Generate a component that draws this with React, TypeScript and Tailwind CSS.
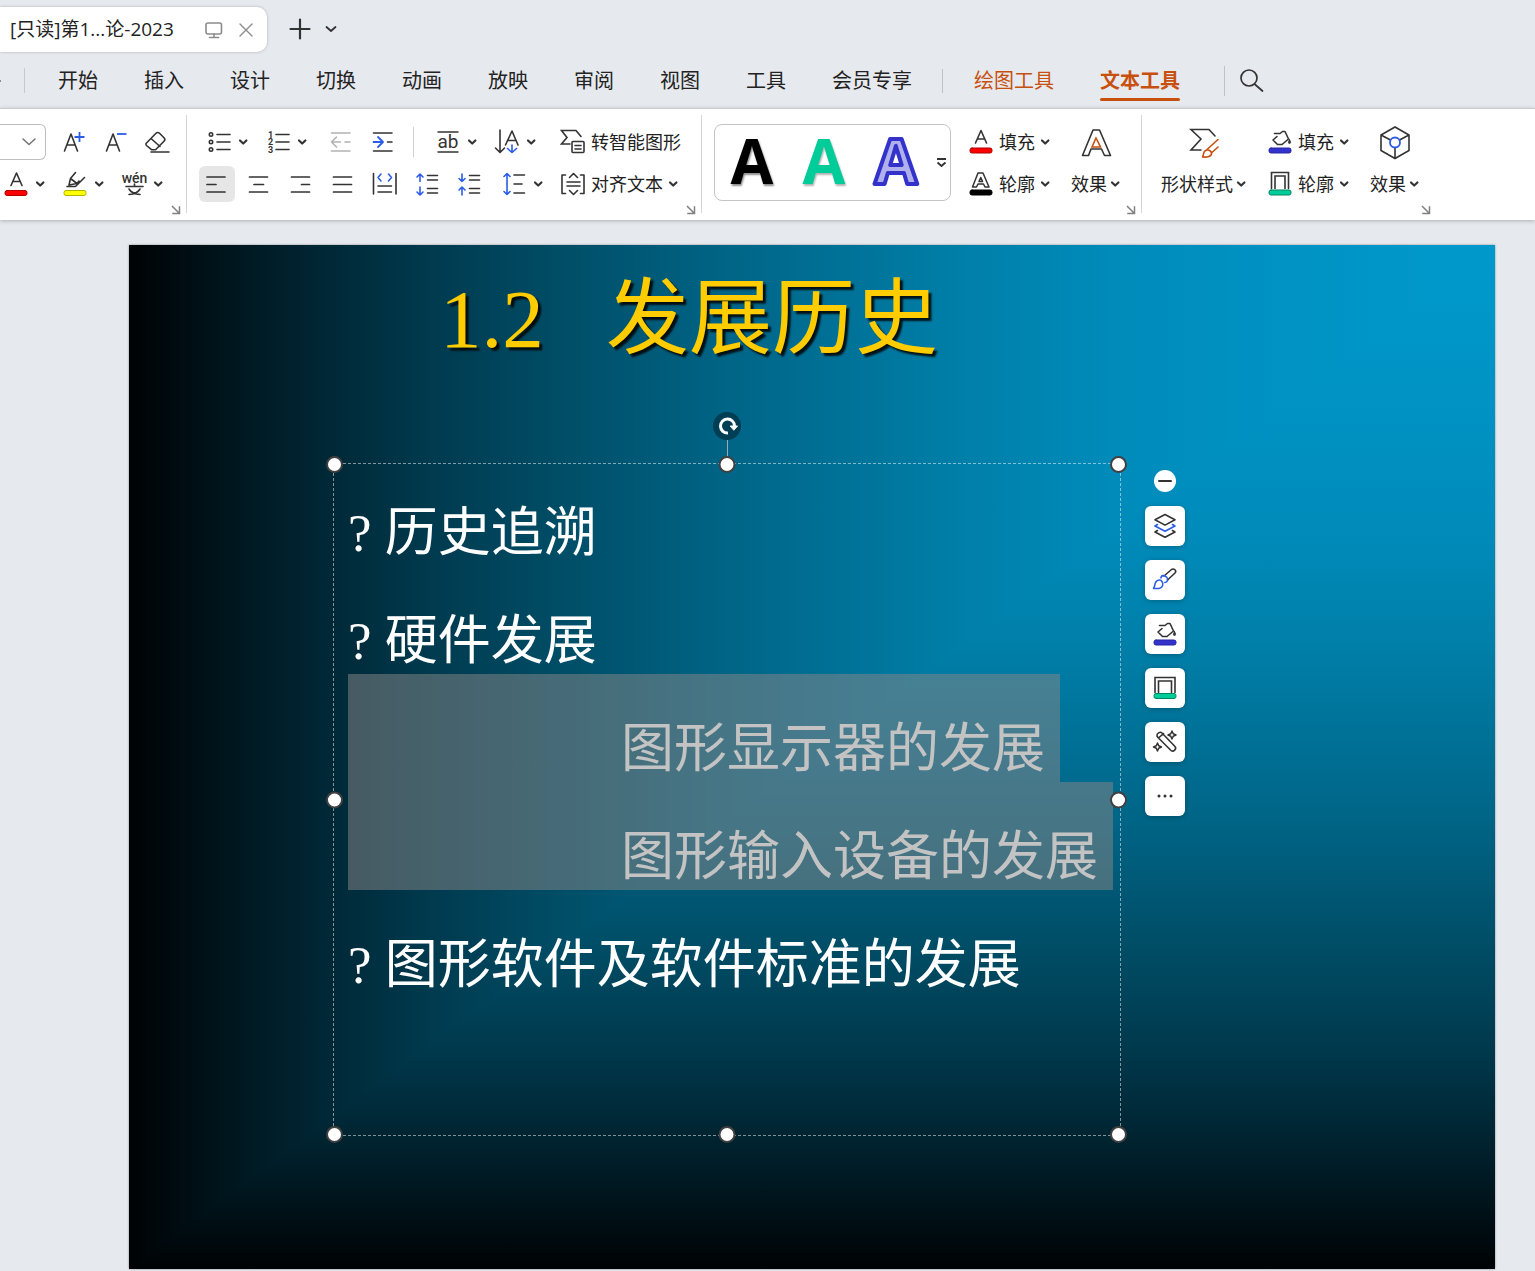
import React from "react";

const INK = "#333333";
const BLUE = "#2b5ce6";
const ORANGE = "#c8500f";

type IconProps = { w?: number; h?: number; children: React.ReactNode; color?: string };

function Icon({ w = 28, h = 28, children, color = INK }: IconProps) {
  return (
    <svg
      width={w}
      height={h}
      viewBox={`0 0 ${w} ${h}`}
      fill="none"
      stroke={color}
      strokeWidth={1.6}
      strokeLinecap="round"
      strokeLinejoin="round"
      className="shrink-0 overflow-visible"
      aria-hidden="true"
    >
      {children}
    </svg>
  );
}

const Chevron = () => (
  <Icon w={12} h={12}>
    <path d="M3 4.500l3.200 3 3.200-3" strokeWidth={2.2} />
  </Icon>
);

function Glyph({ x, y, size, weight = 700, children }: { x: number; y: number; size: number; weight?: number; children: string }) {
  return (
    <text x={x} y={y} fontSize={size} fontFamily="Roboto, sans-serif" fontWeight={weight} fill={INK} stroke="none" textAnchor="middle">
      {children}
    </text>
  );
}

function ColorBar({ fill, edge, y = 20 }: { fill: string; edge: string; y?: number }) {
  return <rect x={3} y={y} width={22} height={5} rx={2} fill={fill} stroke={edge} strokeWidth={1} />;
}

function Split({ label, children }: { label: string; children: React.ReactNode }) {
  return (
    <button aria-label={label} className="flex h-9 w-[59px] shrink-0 items-center gap-1">
      {children}
      <Chevron />
    </button>
  );
}

function Tool({ label, active, children }: { label: string; active?: boolean; children: React.ReactNode }) {
  return (
    <button aria-label={label} className={`flex size-9 shrink-0 items-center justify-center rounded-md ${active ? "bg-[#e6e6e6]" : ""}`}>
      {children}
    </button>
  );
}

function Labeled({ icon, text, arrow }: { icon: React.ReactNode; text: string; arrow?: boolean }) {
  return (
    <button className="flex h-9 shrink-0 items-center gap-1 whitespace-nowrap">
      {icon}
      <span>{text}</span>
      {arrow && <Chevron />}
    </button>
  );
}

function Stacked({ icon, text }: { icon: React.ReactNode; text: string }) {
  return (
    <button className="flex shrink-0 flex-col items-center gap-1.5">
      <span className="flex h-9 items-center">{icon}</span>
      <span className="flex h-9 items-center whitespace-nowrap">
        {text}
        <span className="ml-0.5"><Chevron /></span>
      </span>
    </button>
  );
}

function Launcher({ label }: { label: string }) {
  return (
    <button aria-label={label} className="absolute right-1 -bottom-[3px]">
      <Icon w={12} h={12} color="#808080">
        <path d="M2.500 2.500l7 7M9.500 3v6.500H3" strokeWidth={1.5} strokeLinecap="square" />
      </Icon>
    </button>
  );
}

const FillIcon = () => (
  <Icon>
    <path d="M8.500 5.500h5.500l2.500-2h2.500l3.500 7.500-6.500 5.500h-4.500l-4.500-4.500 4-3.500" />
    <path d="M23.500 11.500c1.600 2.400 1.400 4 0 4s-1.600-1.600 0-4z" fill={INK} strokeWidth={0.8} />
    <ColorBar fill="#3333cc" edge="#2424a8" />
  </Icon>
);

const OutlineIcon = () => (
  <Icon>
    <path d="M5.500 18.500V2.500h17v16M9 18.500V6h10v12.500" strokeLinejoin="miter" />
    <ColorBar fill="#00cc99" edge="#00875f" />
  </Icon>
);

const rows = (d: string, color = INK) => (
  <Icon color={color}><path d={d} strokeWidth={1.7} /></Icon>
);

const menus = ["开始", "插入", "设计", "切换", "动画", "放映", "审阅", "视图", "工具", "会员专享"];

function TitleBar() {
  return (
    <header className="flex h-[53px] items-start pt-[7px]">
      <div className="flex h-[45px] w-[267px] shrink-0 items-center rounded-r-[10px] bg-white pl-[10px] shadow-[0_0_3px_rgba(0,0,0,0.25)]">
        <span className="flex-1 whitespace-nowrap text-[19px]">[只读]第1...论-2023</span>
        <Icon w={20} h={20} color="#8c8c8c">
          <rect x={2} y={3} width={15.500} height={11} rx={2} />
          <path d="M10 14v3M5.500 17.500h9" />
        </Icon>
        <button aria-label="关闭" className="mr-[11px] ml-3">
          <Icon w={20} h={20} color="#8c8c8c"><path d="M4 4l12 12M16 4L4 16" strokeWidth={1.4} /></Icon>
        </button>
      </div>
      <button aria-label="新建" className="ml-5 flex h-11 items-center">
        <Icon w={26} h={26}><path d="M13 3.500v19M3.500 13h19" strokeWidth={2.2} /></Icon>
      </button>
      <button aria-label="标签列表" className="ml-2.5 flex h-11 items-center">
        <Icon w={16} h={16}><path d="M3.500 6l4.500 4 4.500-4" strokeWidth={1.8} /></Icon>
      </button>
    </header>
  );
}

function MenuBar() {
  return (
    <nav className="flex h-[55px] items-center text-xl whitespace-nowrap">
      <span className="h-0.5 w-px bg-[#8a8d92]" />
      <span className="mr-[33px] ml-[23px] h-[25px] w-px bg-[#c6c9cd]" />
      <div className="flex gap-[46px]">
        {menus.map((m) => (
          <button key={m}>{m}</button>
        ))}
      </div>
      <span className="mr-[31px] ml-[30px] h-6 w-px bg-[#bfc2c6]" />
      <button className="text-[#c8500f]">绘图工具</button>
      <button className="relative ml-[46px] font-bold text-[#c8500f]">
        文本工具
        <span className="absolute -bottom-1.5 left-0 h-[3px] w-full rounded-full bg-[#c8500f]" />
      </button>
      <span className="mr-3.5 ml-11 h-[30px] w-px bg-[#bfc2c6]" />
      <button aria-label="搜索">
        <Icon w={26} h={26}><path d="M15.500 16l8 7M2 10a8 8 0 1016 0 8 8 0 10-16 0" strokeWidth={1.7} /></Icon>
      </button>
    </nav>
  );
}

function FontGroup() {
  return (
    <section className="relative flex w-[187px] shrink-0 flex-col gap-1.5 border-r border-[#d4d4d4] pt-[9px]">
      <div className="flex">
        <button aria-label="字号" className="mr-[9px] flex h-9 w-[46px] items-center rounded-r-md border border-l-0 border-[#bdbdbd] pl-5">
          <Icon w={18} h={18} color="#737373"><path d="M3 6l6 5.500L15 6" strokeWidth={1.500} /></Icon>
        </button>
        <div className="flex gap-1.5">
          <Tool label="增大字号">
            <Icon>
              <path d="M5.500 23L12 6l6.500 17M8 17h8" />
              <path d="M20.500 4v10M15.500 9h10" stroke={BLUE} strokeWidth={1.8} strokeLinecap="butt" />
            </Icon>
          </Tool>
          <Tool label="减小字号">
            <Icon>
              <path d="M5.500 23L12 6l6.500 17M8 17h8" />
              <path d="M16 6h9.500" stroke={BLUE} strokeWidth={1.8} strokeLinecap="butt" />
            </Icon>
          </Tool>
          <Tool label="清除格式">
            <Icon>
              <path d="M3 15.500L13 5.200c1-1 2.500-1 3.500 0l4.500 4.500c1 1 1 2.500 0 3.500l-8.500 8.500H8.500L3.500 17.500c-.700-.700-.700-1.300-.500-2zM8 10.500l9 8M8 24h18" />
            </Icon>
          </Tool>
        </div>
      </div>
      <div className="flex pl-0.5">
        <Split label="字体颜色">
          <Icon><path d="M9 15.500L14.500 3 20 15.500M11 11.500h7" /><ColorBar fill="#ff0000" edge="#b00000" y={20.500} /></Icon>
        </Split>
        <Split label="突出显示">
          <Icon><path d="M6 16.500h8.500l9-9M14.500 2.500L9.500 8.500 8 15l8-1.500M9.500 8.500l6.500 5 2-2.500" /><ColorBar fill="#ffff00" edge="#b3b300" y={20.500} /></Icon>
        </Split>
        <Split label="拼音指南">
          <Icon>
            <Glyph x={14.500} y={13} size={14} weight={500}>wén</Glyph>
            <path d="M6 16.500h17M14.500 14v2.500M9 19c2 3.500 6 5 11 5.500M20 19c-2 3.500-6 5-11 5.500" />
          </Icon>
        </Split>
      </div>
      <Launcher label="字体设置" />
    </section>
  );
}

function ParagraphGroup() {
  return (
    <section className="relative flex w-[515px] shrink-0 flex-col gap-1.5 border-r border-[#d4d4d4] pt-[9px] pl-3">
      <div className="flex items-center pl-1.5">
        <Split label="项目符号">
          <Icon>
            <path d="M12 6.500h13M12 14h13M12 21.500h13" />
            <circle cx={6} cy={6.500} r={1.700} /><circle cx={6} cy={14} r={1.700} /><circle cx={6} cy={21.500} r={1.700} />
          </Icon>
        </Split>
        <Split label="编号">
          <Icon>
            <path d="M12 6.500h13M12 14h13M12 21.500h13" />
            <Glyph x={6.500} y={9.500} size={9}>1</Glyph>
            <Glyph x={6.500} y={17} size={9}>2</Glyph>
            <Glyph x={6.500} y={24.500} size={9}>3</Glyph>
          </Icon>
        </Split>
        <div className="flex gap-1.5">
          <Tool label="减少缩进">
            <Icon color="#b3b3b3"><path d="M4.500 5h18.500M4.500 23h18.500M4.500 14h9M18 14h5M9.500 9l-5 5 5 5" /></Icon>
          </Tool>
          <Tool label="增加缩进">
            <Icon>
              <path d="M4.500 5h18.500M4.500 23h18.500M18.500 14h4.500" />
              <path d="M4.500 14h9M9 9l5 5-5 5" stroke={BLUE} strokeWidth={1.800} />
            </Icon>
          </Tool>
        </div>
        <span className="mr-5 ml-3 h-[30px] w-px bg-[#cfcfcf]" />
        <Split label="上划线">
          <Icon>
            <path d="M3.500 4h21M3.500 24h21" strokeLinecap="butt" />
            <text x={14} y={19.500} fontSize={19} fontFamily="Roboto, sans-serif" fill={INK} stroke="none" textAnchor="middle">ab</text>
          </Icon>
        </Split>
        <Split label="文字方向">
          <Icon>
            <path d="M7 2v22M2.500 20l4.500 4.500 4.500-4.500M12.500 17L19 3l6 14M14.500 12.500h8.500" />
            <path d="M19 17v7M14.500 20.500l4.500 4 4.500-4" stroke={BLUE} />
          </Icon>
        </Split>
        <span className="w-[7px]" />
        <Labeled
          text="转智能图形"
          icon={
            <Icon>
              <path d="M11 16H2.500l5.500-6.500L2.500 2.500H17l5 6" strokeLinejoin="miter" />
              <rect x={13} y={13.500} width={12} height={11} rx={1} /><path d="M16 17.500h6M16 21h6" />
            </Icon>
          }
        />
      </div>
      <div className="flex items-center">
        <div className="flex gap-1.5">
          <Tool label="左对齐" active>{rows("M4 7h18M4 14.500h9M4 22h18")}</Tool>
          <Tool label="居中">{rows("M4.500 7h18M9 14.500h9.500M4.500 22h18")}</Tool>
          <Tool label="右对齐">{rows("M4.500 7h18M14.500 14.500h8M4.500 22h18")}</Tool>
          <Tool label="两端对齐">{rows("M4.500 7h18M4.500 14.500h18M4.500 22h18")}</Tool>
          <Tool label="分散对齐">
            <Icon>
              <path d="M2.500 3.500v20.500M25 3.500v20.500M7 16h13.500M7 22h13.500" />
              <path d="M10 4l-3 3.500 3 3.500M17.500 4l3 3.500-3 3.500" stroke={BLUE} />
            </Icon>
          </Tool>
          <Tool label="增大行距">
            <Icon>
              <path d="M14.500 5.500h10M14.500 10h10M14.500 18.500h10M14.500 23h10" />
              <path d="M7 11.500V4M4 7l3-3 3 3M7 17v8M4 22l3 3 3-3" stroke={BLUE} />
            </Icon>
          </Tool>
          <Tool label="减小行距">
            <Icon>
              <path d="M14.500 5.500h10M14.500 10h10M14.500 18.500h10M14.500 23h10" />
              <path d="M7 4v7.500M4 8.500l3 3 3-3M7 25v-8M4 20l3-3 3 3" stroke={BLUE} />
            </Icon>
          </Tool>
        </div>
        <span className="w-[13px]" />
        <Split label="行距">
          <Icon>
            <path d="M14 5h10.500M14 14h8M14 23h10.500" />
            <path d="M7 3.500v21M4 6.500l3-3 3 3M4 21.500l3 3 3-3" stroke={BLUE} />
          </Icon>
        </Split>
        <Labeled
          arrow
          text="对齐文本"
          icon={
            <Icon>
              <path d="M6.500 5H3v18.500h3.500M21.500 5H25v18.500h-3.500M8 12h13M8 16h13M10.500 7.500l4-4 4 4M10.500 20.500l4 4 4-4" />
            </Icon>
          }
        />
      </div>
      <Launcher label="段落设置" />
    </section>
  );
}

function TextStyleGroup() {
  return (
    <section className="relative flex w-[440px] shrink-0 items-start border-r border-[#d4d4d4] pt-[9px] pl-3">
      <div className="flex h-[77px] w-[237px] items-center rounded-lg border border-[#c4c4c4] pl-px font-['Open_Sans',sans-serif] text-[62px] leading-[54px] font-bold">
        <button className="flex h-full w-[72px] justify-center pt-2 text-black [text-shadow:1px_2px_2px_rgba(0,0,0,0.45)]">A</button>
        <button className="flex h-full w-[72px] justify-center pt-2 text-[#00cc99] [text-shadow:1px_2px_2px_rgba(0,0,0,0.3)]">A</button>
        <button className="flex h-full w-[72px] items-center justify-center">
          <Icon w={60} h={60} color="#3333cc">
            <text x={30} y={51} fontSize={62} fontWeight={700} fontFamily="Open Sans, sans-serif" fill="#b0b0ec" strokeWidth={4} textAnchor="middle">A</text>
          </Icon>
        </button>
        <button aria-label="更多样式">
          <Icon w={18} h={18}><path d="M5 5h9M5.500 8.500l4 3.500 4-3.500" strokeWidth={1.800} strokeLinecap="butt" /></Icon>
        </button>
      </div>
      <div className="ml-4 flex flex-col gap-1.5">
        <Labeled arrow text="填充" icon={<Icon><path d="M8.500 15L14 2.500 19.500 15M10.500 11h7" /><ColorBar fill="#ff0000" edge="#b00000" /></Icon>} />
        <Labeled
          arrow
          text="轮廓"
          icon={
            <Icon>
              <path d="M5.500 17L11 3h5L22 17h-4l-1.500-3h-5.500l-1.500 3zM13.800 7.500l-1.800 4h3.600z" strokeWidth={1.500} />
              <ColorBar fill="#000000" edge="#000000" />
            </Icon>
          }
        />
      </div>
      <div className="ml-5">
        <Stacked
          text="效果"
          icon={
            <Icon w={32} h={32}>
              <path d="M2.500 29.500L13 4h6.500L30.500 29.500h-6l-3-6.500H11l-2.500 6.500z" />
              <path d="M16 12l-4 9h8.500z" stroke={ORANGE} strokeLinejoin="miter" />
            </Icon>
          }
        />
      </div>
      <Launcher label="文本效果设置" />
    </section>
  );
}

function ShapeStyleGroup() {
  return (
    <section className="relative flex w-[294px] shrink-0 items-start pt-[9px] pl-[19px]">
      <Stacked
        text="形状样式"
        icon={
          <Icon w={32} h={32}>
            <path d="M13 24H3l10-11L3 3.500h18l6 6.500" strokeLinejoin="miter" />
            <path d="M14.500 31c1.500-2.500.500-5 3-6.500 3-1.500 6 .500 6 3 0 3-4 4-9 3.500zM19 23.500l11-10M24 26.500l6-5.500" stroke={ORANGE} />
          </Icon>
        }
      />
      <div className="ml-[19px] flex flex-col gap-1.5">
        <Labeled arrow text="填充" icon={<FillIcon />} />
        <Labeled arrow text="轮廓" icon={<OutlineIcon />} />
      </div>
      <div className="ml-5">
        <Stacked
          text="效果"
          icon={
            <Icon w={36} h={36}>
              <path d="M18 3l14 8v15.500L18 34.500 4 26.500V11zM4 11l9.500 5M32 11l-9.500 5M18 24v10" strokeLinejoin="miter" />
              <circle cx={18} cy={18.500} r={5} stroke={BLUE} strokeWidth={1.800} />
            </Icon>
          }
        />
      </div>
      <Launcher label="形状格式设置" />
    </section>
  );
}

function Handle({ place }: { place: string }) {
  return <span className={`absolute size-[17px] rounded-full border-2 border-[#404040] bg-white ${place}`} />;
}

const handles = [
  "-top-2 -left-2",
  "-top-2 left-1/2 -translate-x-1/2",
  "-top-2 -right-[7px]",
  "top-1/2 -left-2 -translate-y-1/2",
  "top-1/2 -right-[7px] -translate-y-1/2",
  "-bottom-2 -left-2",
  "-bottom-2 left-1/2 -translate-x-1/2",
  "-bottom-2 -right-[7px]",
];

function FloatingTools() {
  const card = "flex size-10 items-center justify-center rounded-md bg-white shadow-[0_1px_5px_rgba(0,0,0,0.25)]";
  return (
    <div className="absolute top-[225px] left-[1016px] flex flex-col items-center gap-3.5">
      <button aria-label="收起" className="flex size-[22px] items-center justify-center rounded-full bg-white">
        <Icon w={16} h={16}><path d="M2 8h12" strokeWidth={2} /></Icon>
      </button>
      <button aria-label="图层" className={card}>
        <Icon>
          <path d="M14 2.500l10 5.300-10 5.300L4 7.800z" />
          <path d="M6.500 12.500L4 14l10 5.300L24 14l-2.500-1.500" stroke={BLUE} />
          <path d="M6.500 18.500L4 20l10 5.300L24 20l-2.500-1.500" />
        </Icon>
      </button>
      <button aria-label="格式刷" className={card}>
        <Icon>
          <path d="M13 10l7.500-6.500c2.500-1.500 5.500 1 3.500 3.500L16.500 14" />
          <path d="M10 12c0-3 3.500-3 5.500-1s1.500 5-1.500 5.500M2.500 22.500c1.500-2 1-4 2-6 2-3.500 5.500-3 6.500-1 2 2.500.500 6.500-3 7z" stroke={BLUE} />
        </Icon>
      </button>
      <button aria-label="形状填充" className={card}><FillIcon /></button>
      <button aria-label="形状轮廓" className={card}>
        <Icon>
          <path d="M4 18.500V3.500h20v15M7.500 18.500V7h13v11.500" strokeLinejoin="miter" />
          <ColorBar fill="#00cc99" edge="#00875f" y={19.500} />
        </Icon>
      </button>
      <button aria-label="美化" className={card}>
        <Icon>
          <path d="M6 8c-.500-2.500 3-5 5-3l13 13.500c2 2.500-1.500 6-4 4L7 9.500zM7.500 10l5-4.500" />
          <path d="M21 3l1.200 2.800L25 7l-2.800 1.200L21 11l-1.200-2.800L17 7l2.800-1.200zM6.500 15l1.200 2.800 2.800 1.200-2.800 1.200L6.500 23l-1.200-2.800L2.500 19l2.800-1.200z" strokeWidth={1.500} />
        </Icon>
      </button>
      <button aria-label="更多" className={card}>
        <Icon><g fill={INK} stroke="none"><circle cx={8} cy={14} r={1.500} /><circle cx={14} cy={14} r={1.500} /><circle cx={20} cy={14} r={1.500} /></g></Icon>
      </button>
    </div>
  );
}

function Slide() {
  const line = "flex h-[108px] items-end whitespace-pre";
  const selected = "w-fit bg-[#868686]/52 pr-0.5 pl-[273px] text-[#c3c3c3]";
  return (
    <main className="relative mr-10 mb-0.5 ml-[129px] aspect-[1366/1024] bg-[linear-gradient(to_right,#000204,#001a24_9%,#003a4e_22%,#00506a_33%,#006587_44%,#007fa9_61%,#008bba_72%,#0093c4_85%,#0099cc),linear-gradient(to_top,#000204,#001a24_9%,#003a4e_22%,#00506a_33%,#006587_44%,#007fa9_61%,#008bba_72%,#0093c4_85%,#0099cc)] bg-blend-darken font-['Liberation_Serif','Noto_Sans_CJK_SC',serif] shadow-[0_0_2px_rgba(0,0,0,0.4)]">
      <h1 className="absolute top-[14px] left-[311px] text-[83px] leading-[120px] whitespace-pre text-[#ffcc00] [text-shadow:3px_3px_2px_rgba(0,0,0,0.85)]">1.2   发展历史</h1>
      <div className="absolute top-[218px] left-[204px] h-[673px] w-[788px] border border-dashed border-white/50">
        <div className="-mt-1.5 ml-3.5 text-[53px] leading-[66px] text-white">
          <p className={line}>? 历史追溯</p>
          <p className={line}>? 硬件发展</p>
          <p className={`${line} ${selected}`}>图形显示器的发展 </p>
          <p className={`${line} ${selected}`}>图形输入设备的发展 </p>
          <p className={line}>? 图形软件及软件标准的发展</p>
        </div>
        <span className="absolute -top-6 left-1/2 h-5 w-px bg-[#a0a8ac]" />
        <button aria-label="旋转" className="absolute -top-[52px] left-1/2 flex size-7 -translate-x-1/2 items-center justify-center rounded-full bg-[#003e54]">
          <Icon w={22} h={22} color="#ffffff">
            <path d="M12 18a7 7 0 116.500-7" strokeWidth={3} strokeLinecap="butt" />
            <path d="M14.500 11h7l-3.500 4z" fill="#fff" strokeWidth={1} />
          </Icon>
        </button>
        {handles.map((h) => (
          <Handle key={h} place={h} />
        ))}
      </div>
      <FloatingTools />
    </main>
  );
}

export default function App() {
  return (
    <div className="min-h-screen overflow-x-hidden bg-[#e6e9ee] font-['Open_Sans','Noto_Sans_CJK_SC',sans-serif] text-[#222222]">
      <TitleBar />
      <MenuBar />
      <div className="flex h-[112px] border-t border-[#c9cbcf] bg-white pt-1.5 pb-[7px] text-lg shadow-[0_1px_4px_rgba(0,0,0,0.25)]">
        <FontGroup />
        <ParagraphGroup />
        <TextStyleGroup />
        <ShapeStyleGroup />
      </div>
      <div className="pt-[25px]">
        <Slide />
      </div>
    </div>
  );
}
